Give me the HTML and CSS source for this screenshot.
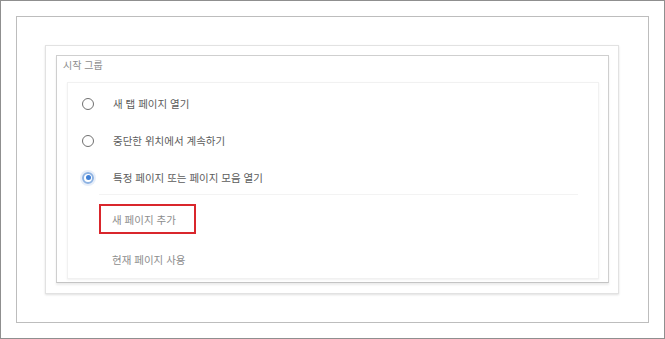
FILE: index.html
```html
<!DOCTYPE html>
<html lang="ko">
<head>
    <meta charset="UTF-8">
    <meta name="viewport" content="width=device-width, initial-scale=1.0">
    <title>시작 그룹</title>
    <link rel="stylesheet" href="styles.css">
</head>
<body>
    <div class="screen">
        <div class="frame">
            <!-- settings card -->
            <div class="card">
                <div class="group-box">
                    <h3 class="group-title">시작 그룹</h3>
                    <div class="panel">
                        <ul class="radio-list">
                            <li class="radio-row">
                                <span class="radio"></span>
                                <span class="radio-label">새 탭 페이지 열기</span>
                            </li>
                            <li class="radio-row">
                                <span class="radio"></span>
                                <span class="radio-label">중단한 위치에서 계속하기</span>
                            </li>
                            <li class="radio-row">
                                <span class="radio checked"></span>
                                <span class="radio-label">특정 페이지 또는 페이지 모음 열기</span>
                            </li>
                        </ul>
                        <div class="divider"></div>
                        <div class="link-list">
                            <a class="page-link highlight">새 페이지 추가</a>
                            <a class="page-link">현재 페이지 사용</a>
                        </div>
                    </div>
                </div>
            </div>
        </div>
    </div>
</body>
</html>
```

FILE: styles.css
```css
/*global*/
* {
    margin: 0;
    padding: 0;
    box-sizing: border-box;
}

body {
    background-color: #fff;
    font-family: "Noto Sans CJK KR", "Noto Sans", sans-serif;
}

ul {
    list-style: none;
}

/*frames*/
.screen {
    width: 665px;
    height: 339px;
    border: 1px solid #8f8f8f;
    padding: 15px 15px 15px 15px;
}

.frame {
    height: 307px;
    border: 1px solid #bdbdbd;
    padding: 28px 29px 28px 28px;
}

.card {
    height: 249px;
    border: 1px solid #e2e2e2;
    box-shadow: 0 1px 2px rgba(0, 0, 0, 0.12);
    padding: 9px 9px 10px 10px;
}

.group-box {
    height: 100%;
    border: 1px solid #cfcfcf;
    border-bottom: 1px solid #c4c4c4;
    box-shadow: 0 2px 2px rgba(0, 0, 0, 0.08);
    padding: 0 9px 3px 10px;
    display: flex;
    flex-direction: column;
}

.group-title {
    height: 26px;
    line-height: 17px;
    padding-left: 6px;
    margin-left: -10px;
    font-size: 10px;
    font-weight: normal;
    color: #8d8d8d;
}

.panel {
    flex: 1;
    border: 1px solid #f1f1f1;
    box-shadow: 0 1px 2px rgba(0, 0, 0, 0.06);
    padding: 2px 20px 0 14px;
}

/*radios*/
.radio-row {
    height: 37px;
    display: flex;
    align-items: center;
}

.radio {
    width: 12px;
    height: 12px;
    border: 1.5px solid #707070;
    border-radius: 50%;
    margin-right: 19px;
    display: flex;
    align-items: center;
    justify-content: center;
}

.radio.checked {
    border: 2px solid #8db2e2;
    box-shadow: 0 0 0 2px rgba(120, 160, 220, 0.18);
}

.radio.checked::after {
    content: "";
    width: 5px;
    height: 5px;
    border-radius: 50%;
    background-color: #3f7fd6;
}

.radio-label {
    font-size: 10.5px;
    color: #5c5c5c;
}

/*links*/
.divider {
    height: 1px;
    margin: -2px 0 0 17px;
    background-color: #f3f3f3;
}

.link-list {
    padding: 9px 0 0 17px;
    display: flex;
    flex-direction: column;
    align-items: flex-start;
    gap: 10px;
}

.page-link {
    width: 97px;
    height: 30px;
    line-height: 27px;
    padding-left: 11px;
    border: 2px solid transparent;
    font-size: 10.5px;
    color: #8d8d8d;
    white-space: nowrap;
}

.page-link.highlight {
    border-color: #d9262c;
}
```
